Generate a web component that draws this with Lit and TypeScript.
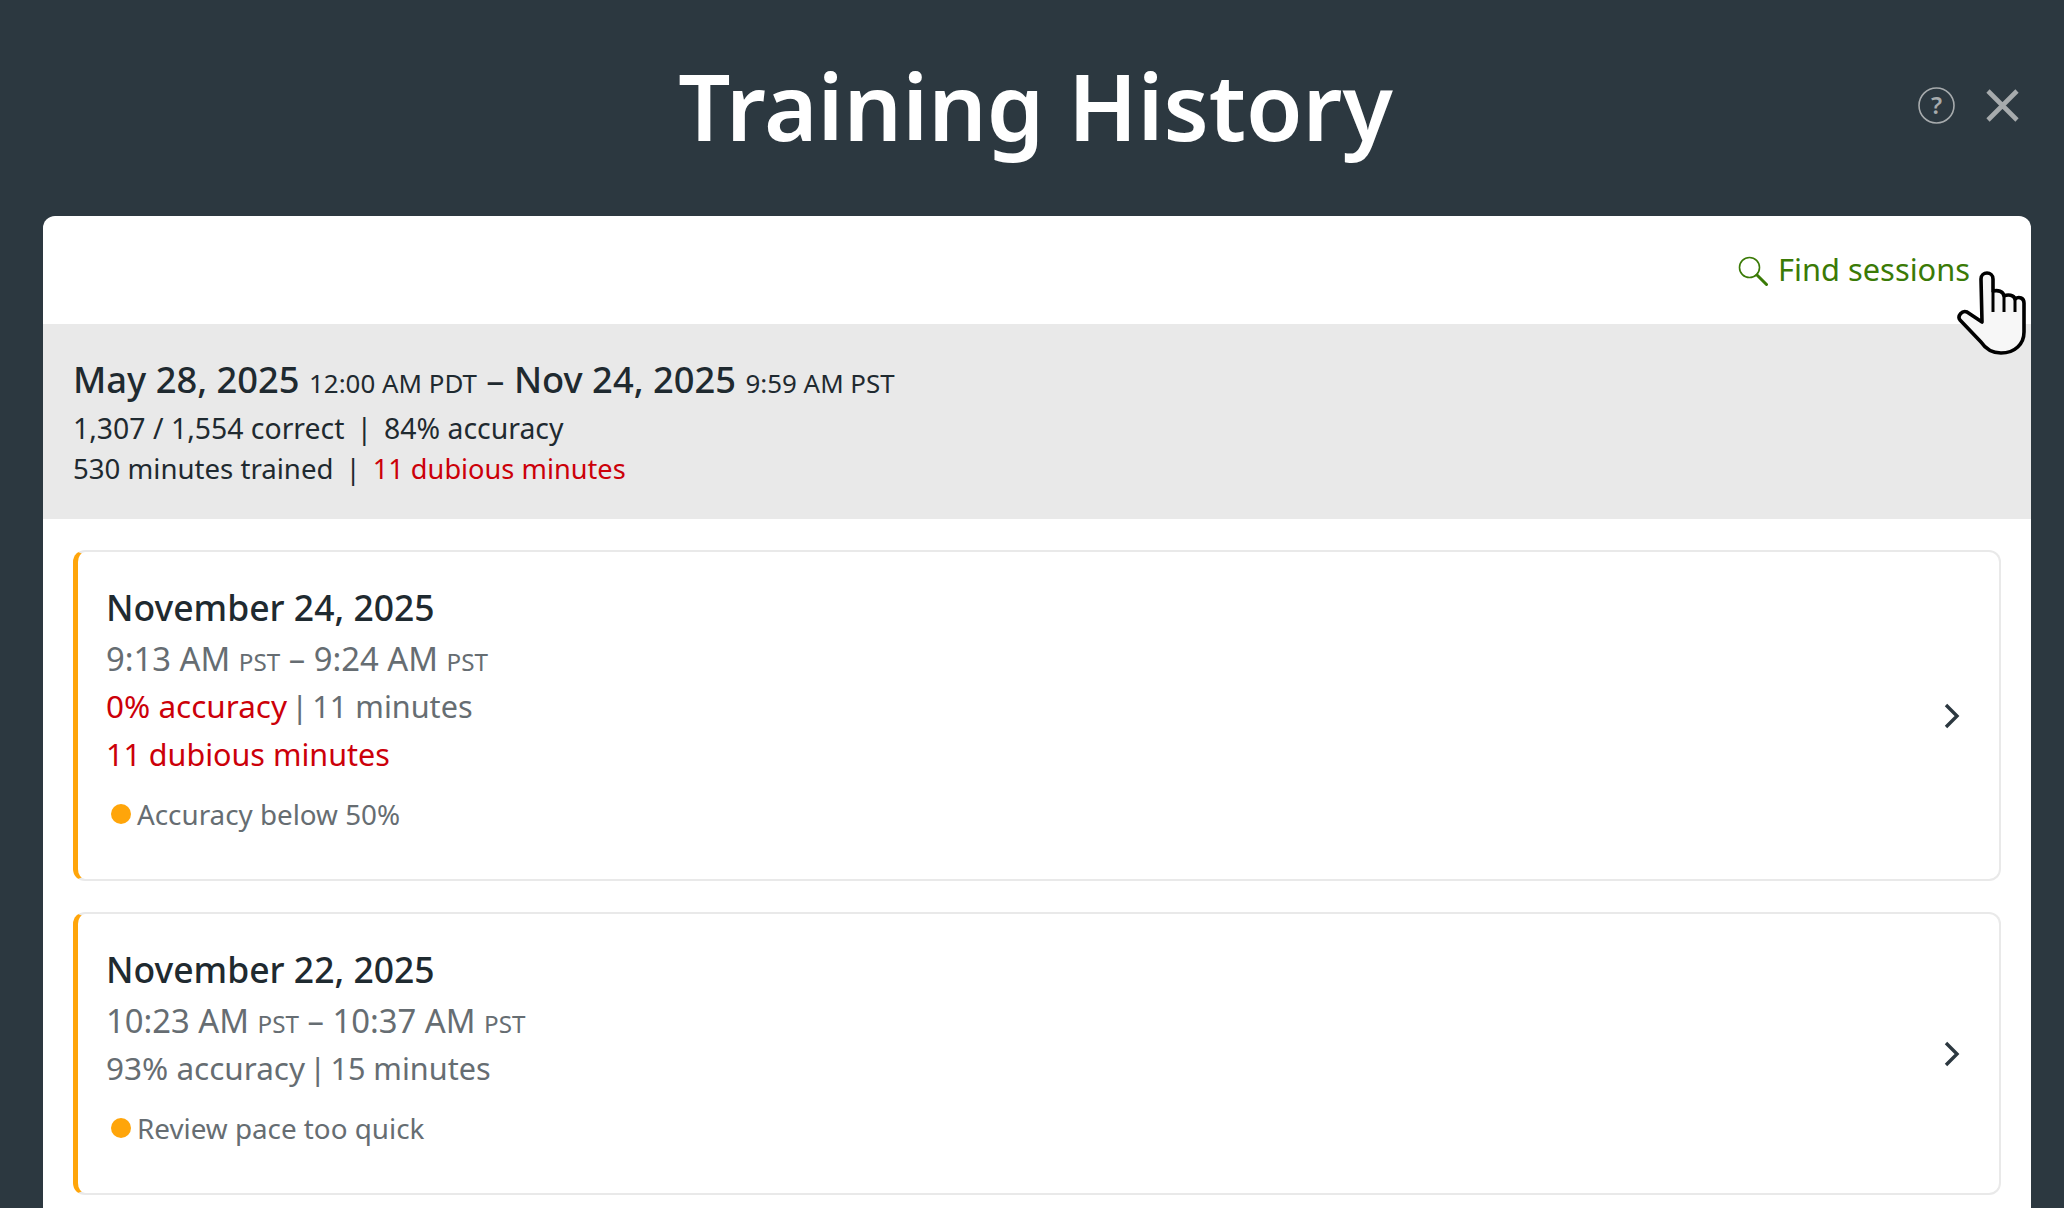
import { LitElement, html, css } from "lit";
import { customElement } from "lit/decorators.js";

interface Session { date: string; t1: string; t2: string; acc: string; mins: string; accBad?: boolean; dubious?: string; flag: string; cls: string; }
const sessions: Session[] = [
  { date: "November 24, 2025", t1: "9:13 AM", t2: "9:24 AM", acc: "0% accuracy", mins: "11 minutes", accBad: true, dubious: "11 dubious minutes", flag: "Accuracy below 50%", cls: "tall" },
  { date: "November 22, 2025", t1: "10:23 AM", t2: "10:37 AM", acc: "93% accuracy", mins: "15 minutes", flag: "Review pace too quick", cls: "short" },
];

@customElement("app-root")
export class AppRoot extends LitElement {
  static styles = css`
    :host { display: block; height: 1208px; overflow: hidden; background: #2c3840; font-family: "Noto Sans", sans-serif; color: #1f2a30; position: relative; }
    .top { height: 216px; display: flex; align-items: center; justify-content: center; position: relative; }
    h1 { margin: 0 0 4px 7px; font: 600 91.8px/1 "Noto Sans", sans-serif; color: #fff; }
    .top-icons { position: absolute; right: 45px; top: 87px; display: flex; align-items: center; gap: 31px; }
    .sheet { margin: 0 33px 0 43px; background: #fff; border-radius: 12px 12px 0 0; height: 992px; }
    .find-row { height: 108px; box-sizing: border-box; display: flex; justify-content: flex-end; align-items: center; padding: 0 61px 3px 0; color: #3a7a06; font-size: 30.8px; gap: 10px; }
    .find-row svg { position: relative; top: 2px; }
    .summary { background: #e9e9e9; height: 195px; box-sizing: border-box; padding: 31px 30px 0; font-size: 28.4px; line-height: 41px; }
    .range { font-size: 36.3px; line-height: 49px; font-weight: 500; }
    .range small { font-size: 25.9px; font-weight: 400; }
    .dash { font-weight: 400; }
    .trained { font-size: 27.6px; margin-top: -1px; }
    .sep { margin: 0 12px; }
    .trained .bad { font-size: 27.2px; }
    .list { padding: 31px 30px 0; display: flex; flex-direction: column; gap: 31px; }
    .card { border: 2px solid #e9e9e9; border-left: 5px solid #ffa50a; border-radius: 12px; padding: 0 39px 0 28px; display: flex; justify-content: space-between; align-items: center; box-sizing: border-box; }
    .card.tall { height: 331px; }
    .card.short { height: 283px; }
    .info { align-self: flex-start; padding-top: 31px; }
    .date { font-size: 35.5px; line-height: 48px; font-weight: 500; }
    .line { font-size: 31.5px; line-height: 48px; color: #666d72; }
    .time { font-size: 32.8px; margin: 4px 0 -4px; }
    .time small { font-size: 24.2px; }
    .pipe { margin: 0 4px; }
    .mins { font-size: 30.6px; }
    .dubious { font-size: 30.5px; }
    .flag { display: flex; align-items: center; font-size: 27.8px; color: #666d72; line-height: 40px; margin-top: 16px; }
    .dot { width: 20px; height: 20px; border-radius: 50%; background: #ffa50a; margin: 0 6px 0 5px; flex: none; }
    .bad { color: #cc0009; }
    .cursor { position: absolute; left: 1957px; top: 270px; }
  `;

  render() {
    return html`
      <div class="top">
        <h1>Training History</h1>
        <div class="top-icons">
          <svg width="37" height="37" viewBox="0 0 37 37" fill="none" stroke="#a7abad" stroke-width="1.6">
            <circle cx="18.5" cy="18.5" r="17.5"/>
            <text x="18.5" y="27" text-anchor="middle" font-family="Noto Sans" font-size="24" font-weight="600" fill="#a7abad" stroke="none">?</text>
          </svg>
          <svg width="33" height="33" viewBox="0 0 33 33" stroke="#a7abad" stroke-width="4.6"><path d="M2 2 31 31M31 2 2 31"/></svg>
        </div>
      </div>
      <div class="sheet">
        <div class="find-row">
          <svg width="30" height="30" viewBox="0 0 30 30" fill="none" stroke="#3a7a06"><circle cx="11.5" cy="11.5" r="10" stroke-width="1.6"/><path d="M19 19 28.5 28.5" stroke-width="3" stroke-linecap="round"/></svg>
          <span>Find sessions</span>
        </div>
        <div class="summary">
          <div class="range">May 28, 2025 <small>12:00 AM PDT</small> <span class="dash">–</span> Nov 24, 2025 <small>9:59 AM PST</small></div>
          <div>1,307 / 1,554 correct<span class="sep">|</span>84% accuracy</div>
          <div class="trained">530 minutes trained<span class="sep">|</span><span class="bad">11 dubious minutes</span></div>
        </div>
        <div class="list">
          ${sessions.map((s) => html`
            <div class="card ${s.cls}">
              <div class="info">
                <div class="date">${s.date}</div>
                <div class="line time">${s.t1} <small>PST</small> – ${s.t2} <small>PST</small></div>
                <div class="line"><span class=${s.accBad ? "bad" : ""}>${s.acc}</span><span class="pipe">|</span><span class="mins">${s.mins}</span></div>
                ${s.dubious ? html`<div class="line bad dubious">${s.dubious}</div>` : ""}
                <div class="flag"><span class="dot"></span>${s.flag}</div>
              </div>
              <svg width="16" height="26" viewBox="0 0 16 26" fill="none" stroke="#2c3840" stroke-width="3.4"><path d="M2 2 13 13 2 24"/></svg>
            </div>`)}
        </div>
      </div>
      <svg class="cursor" width="70" height="88" viewBox="0 0 70 88">
        <path d="M24 9C24 1 36 1 36 9V21C41 20 46 21 47 26C51 24 57 25 58 29C62 26 67 28 67 33V62C67 74 58 83 44 83C34 83 28 78 24 72L3 50C0 46 5 40 10 42L25 52Z" fill="#f7f7f7" stroke="#000" stroke-width="3.6" stroke-linejoin="round"/>
        <path d="M36 21V42M47 26V42M58 29V42" fill="none" stroke="#000" stroke-width="3"/>
      </svg>
    `;
  }
}
